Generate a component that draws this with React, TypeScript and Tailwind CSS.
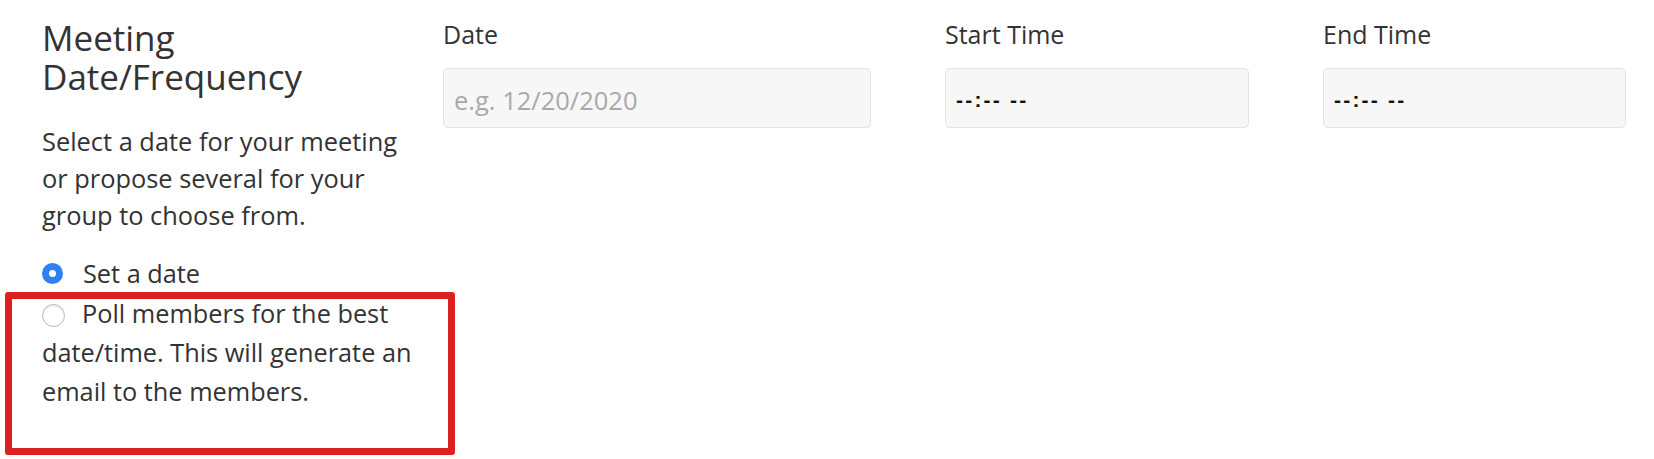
import React from "react";

function Radio({ checked }: { checked?: boolean }) {
  if (checked) {
    return (
      <span className="flex h-[21px] w-[21px] shrink-0 items-center justify-center rounded-full bg-[#2f80f5]">
        <span className="h-[7px] w-[7px] rounded-full bg-white" />
      </span>
    );
  }
  return (
    <span className="block h-[23px] w-[23px] shrink-0 rounded-full border border-[#b8b8b8] bg-white shadow-[inset_0_1px_2px_rgba(0,0,0,0.12)]" />
  );
}

function Field({ label, width, children }: { label: string; width: string; children: React.ReactNode }) {
  return (
    <div className={`flex flex-col ${width}`}>
      <div className="h-[36px] text-[25px] leading-[36px] text-[#333]">{label}</div>
      <div className="mt-[16px] flex h-[60px] items-center rounded-[5px] border border-[#e3e3e3] bg-[#f7f7f7] px-[10px] pt-[4px]">
        {children}
      </div>
    </div>
  );
}

export default function App() {
  return (
    <div
      className="flex h-[459px] w-[1654px] bg-white text-[#333]"
      style={{ fontFamily: '"Open Sans", "Noto Sans", sans-serif' }}
    >
      <div className="flex w-[443px] shrink-0 flex-col pl-[42px] pt-[18px]">
        <h2 className="w-[380px] text-[35px] leading-[39px] text-[#333]">
          Meeting
          <br />
          Date/Frequency
        </h2>
        <p className="mt-[27px] w-[385px] text-[25.4px] leading-[37px]">
          Select a date for your meeting or propose several for your group to choose from.
        </p>
        <div className="mt-[20px] flex h-[38px] items-center gap-[20px] text-[25.3px] leading-[38px]">
          <Radio checked />
          <span>Set a date</span>
        </div>
        <div className="-ml-[37px] mt-0 w-[450px] rounded-[3px] border-[7px] border-[#dd2020] pb-[37px] pl-[30px] pr-[24px]">
          <p className="-mt-[5px] text-[25.3px] leading-[39px]">
            <span className="mr-[17px] inline-block align-[-4px]">
              <Radio />
            </span>
            Poll members for the best date/time. This will generate an email to the members.
          </p>
        </div>
      </div>
      <div className="flex gap-[74px] pt-[16px]">
        <Field label="Date" width="w-[428px]">
          <span className="text-[25.5px] text-[#a9a9a9]">e.g. 12/20/2020</span>
        </Field>
        <Field label="Start Time" width="w-[304px]">
          <span className="text-[21px] font-bold tracking-[2.2px] text-[#111]" style={{ fontFamily: '"Liberation Sans", sans-serif' }}>--:-- --</span>
        </Field>
        <Field label="End Time" width="w-[303px]">
          <span className="text-[21px] font-bold tracking-[2.2px] text-[#111]" style={{ fontFamily: '"Liberation Sans", sans-serif' }}>--:-- --</span>
        </Field>
      </div>
    </div>
  );
}
